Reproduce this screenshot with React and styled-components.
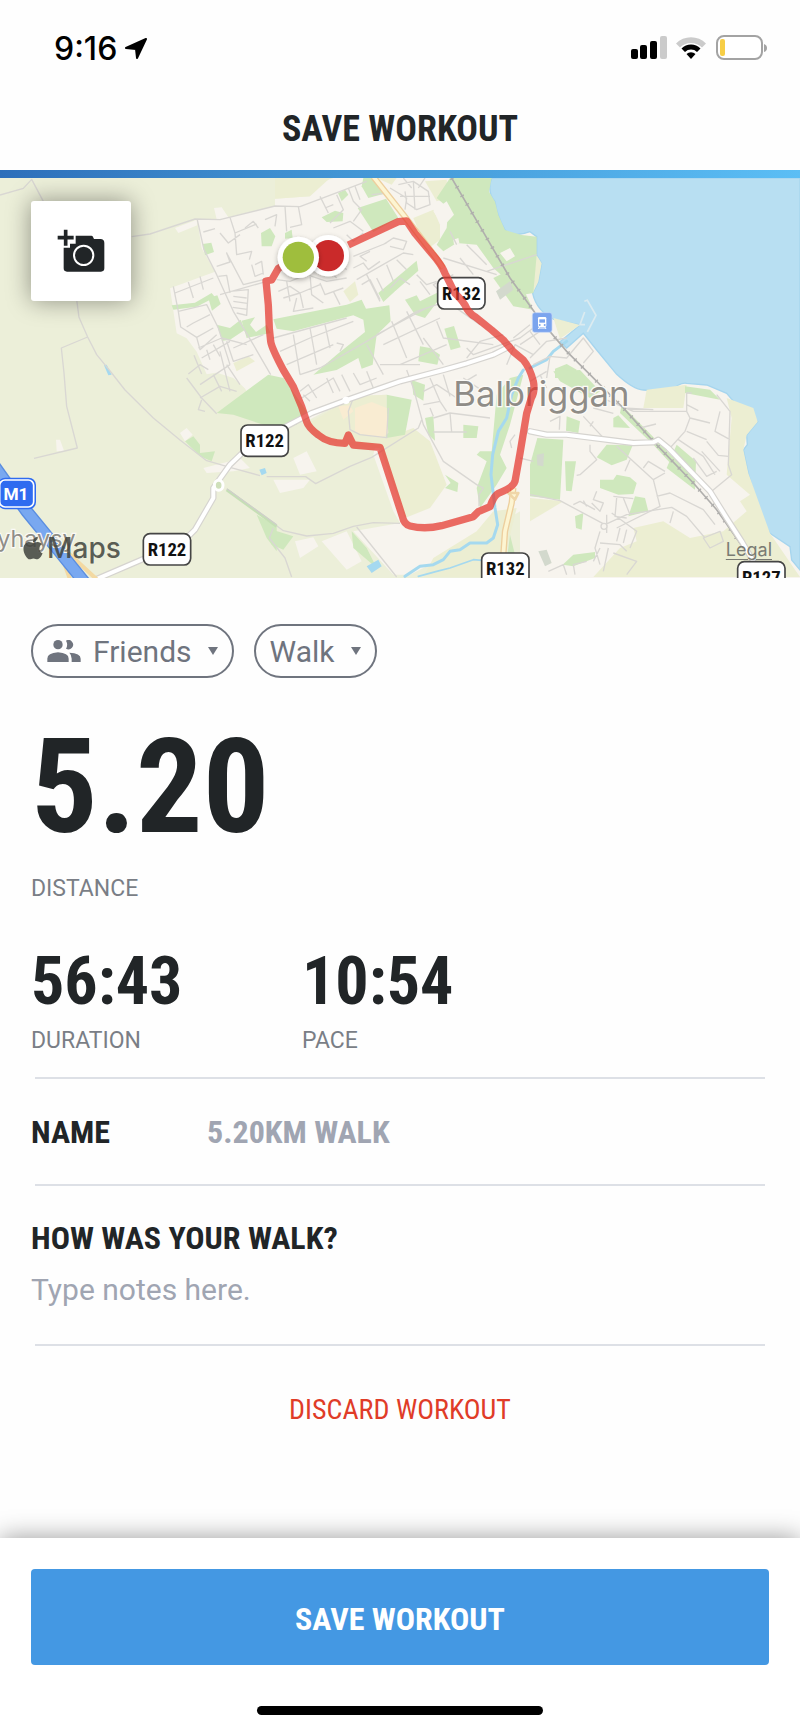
import React from 'react';
import styled, { createGlobalStyle } from 'styled-components';
import { FaApple } from 'react-icons/fa';

const condensed = "'Roboto Condensed', Roboto, 'Liberation Sans', sans-serif";

const GlobalStyle = createGlobalStyle`
  * {
    box-sizing: border-box;
  }

  body {
    margin: 0;
    background: #fefefe;
    font-family: Roboto, 'Liberation Sans', sans-serif;
    color: #212527;
  }

  button,
  input,
  select,
  textarea {
    font-family: inherit;
    margin: 0;
  }
`;

const Screen = styled.div`
  min-height: 100vh;
  display: flex;
  flex-direction: column;
`;

const StatusBar = styled.div`
  display: flex;
  align-items: center;
  justify-content: space-between;
  height: 96px;
  padding: 0 33px 0 54px;
`;

const StatusGroup = styled.div`
  display: flex;
  align-items: center;
  gap: 8px;
`;

const Time = styled.span`
  font-family: Inter, sans-serif;
  font-size: 32px;
  font-weight: 500;
  color: #000;
`;

const TitleBar = styled.header`
  display: flex;
  align-items: center;
  justify-content: center;
  height: 74px;
  padding-bottom: 8px;
`;

const Title = styled.h1`
  margin: 0;
  font-family: ${condensed};
  font-size: 36px;
  line-height: 36px;
  font-weight: 700;
`;

const Accent = styled.div`
  height: 8px;
  background: linear-gradient(90deg, #2d6fba 0%, #3f8fd0 35%, #5bbef5 100%);
`;

const MapArea = styled.section`
  position: relative;
  aspect-ratio: 2 / 1;
  overflow: hidden;
  background: #ecefd9;
`;

const MapSvg = styled.svg`
  display: block;
  width: 100%;
  height: 100%;
`;

const PhotoButton = styled.button`
  position: absolute;
  top: 23px;
  left: 31px;
  display: flex;
  align-items: center;
  justify-content: center;
  width: 100px;
  height: 100px;
  padding: 0;
  border: 0;
  border-radius: 3px;
  background: #fff;
  box-shadow: 0 0 24px rgba(0, 0, 0, 0.4);
  cursor: pointer;
`;

const MapsLogo = styled.div`
  position: absolute;
  left: 20px;
  bottom: 12px;
  display: flex;
  align-items: center;
  gap: 1px;
  font-family: Inter, sans-serif;
  font-size: 28px;
  line-height: 36px;
  font-weight: 500;
  color: rgba(64, 66, 60, 0.85);
`;

const LegalLink = styled.a`
  position: absolute;
  right: 28px;
  bottom: 16px;
  font-family: Inter, sans-serif;
  font-size: 18px;
  line-height: 24px;
  color: #7a7b73;
  text-underline-offset: 3px;
`;

const Content = styled.main`
  flex: 1;
  padding: 46px 31px 0;
`;

const ChipRow = styled.div`
  display: flex;
  gap: 20px;
`;

const Chip = styled.label`
  display: flex;
  align-items: center;
  height: 54px;
  padding: 0 14px;
  border: 2px solid #6f747e;
  border-radius: 27px;
  color: #6f747e;
`;

const ChipSelect = styled.select`
  appearance: none;
  field-sizing: content;
  padding: 2px 0 0;
  margin: 0 16px 0 ${({ $iconed }) => ($iconed ? '12px' : '0')};
  border: 0;
  outline: 0;
  background: transparent;
  color: inherit;
  font-size: 30px;
  line-height: 36px;
`;

const Stat = styled.div`
  display: flex;
  flex-direction: column;
`;

const StatValue = styled.span`
  font-family: ${condensed};
  font-weight: 700;
  font-size: ${({ $large }) => ($large ? '132px' : '66px')};
  line-height: ${({ $large }) => ($large ? '112px' : '70px')};
  margin-bottom: ${({ $large }) => ($large ? '32px' : '10px')};
`;

const StatLabel = styled.span`
  font-size: 23px;
  line-height: 28px;
  color: #7a7e86;
`;

const Distance = styled.section`
  margin-top: 53px;
`;

const StatGrid = styled.section`
  display: grid;
  grid-template-columns: 271px 1fr;
  margin-top: 44px;
  margin-bottom: 22px;
`;

const Rule = styled.hr`
  height: 2px;
  margin: 0 4px;
  border: 0;
  background: #dde0e6;
`;

const NameRow = styled.div`
  display: flex;
  align-items: center;
  height: 105px;
`;

const FieldLabel = styled.label`
  font-family: ${condensed};
  font-size: 32px;
  line-height: 36px;
  font-weight: 700;
`;

const NameLabel = styled(FieldLabel)`
  width: 176px;
`;

const NameInput = styled.input`
  flex: 1;
  min-width: 0;
  padding: 0;
  border: 0;
  outline: 0;
  background: transparent;
  font-family: ${condensed};
  font-size: 32px;
  line-height: 36px;
  font-weight: 700;

  &::placeholder {
    color: #a0a5b2;
    opacity: 1;
  }
`;

const Notes = styled.div`
  display: flex;
  flex-direction: column;
  gap: 16px;
  padding: 34px 0 36px;
`;

const NotesInput = styled.textarea`
  height: 36px;
  padding: 0;
  border: 0;
  outline: 0;
  resize: none;
  background: transparent;
  font-size: 30px;
  line-height: 36px;

  &::placeholder {
    color: #a0a5b2;
    opacity: 1;
  }
`;

const DiscardButton = styled.button`
  display: block;
  margin: 46px auto;
  padding: 0;
  border: 0;
  background: none;
  color: #e03c28;
  font-family: ${condensed};
  font-size: 28px;
  line-height: 36px;
  cursor: pointer;
`;

const Footer = styled.footer`
  display: flex;
  flex-direction: column;
  align-items: center;
  padding: 31px 31px 16px;
  background: #fff;
  box-shadow: 0 0 24px rgba(0, 0, 0, 0.4);
`;

const SaveButton = styled.button`
  width: 100%;
  height: 96px;
  padding: 4px 0 0;
  border: 0;
  border-radius: 4px;
  background: #4498e3;
  color: #fff;
  font-family: ${condensed};
  font-size: 32px;
  font-weight: 700;
  cursor: pointer;
`;

const HomeIndicator = styled.div`
  width: 286px;
  height: 9px;
  margin-top: 41px;
  border-radius: 5px;
  background: #000;
`;

const PARKS = [
  // north-west estates
  'M515 382 L585 374 635 345 645 358 590 386 520 395Z',
  'M625 360 L652 352 662 378 636 398Z',
  'M608 198 L634 194 642 222 615 232Z',
  'M650 440 L690 450 722 425 735 455 690 485 668 488Z',
  'M725 428 L765 418 750 440 768 462 800 440 812 465 740 480Z',
  'M783 165 L810 150 826 175 815 205 785 205Z',
  'M855 165 L875 155 878 180 855 182Z',
  'M965 118 L1005 98 1030 105 1028 130 980 132Z',
  'M1014 45 L1035 35 1045 50 1025 70Z',
  'M1090 0 L1115 0 1150 48 1105 60 1085 25Z',
  'M1073 90 L1158 62 1195 120 1120 162Z',
  // central belt
  'M820 424 L1040 380 1085 365 1098 392 1168 382 1172 430 1130 470 1118 560 1085 572 1075 540 1010 576 940 590 1010 530 1095 462 1090 425 1060 412 880 460 830 452Z',
  'M1135 345 L1250 248 1255 278 1185 340 1150 372Z',
  'M1215 365 L1250 352 1260 370 1310 345 1320 360 1275 420 1245 410Z',
  'M1333 452 L1362 444 1382 508 1352 516Z',
  'M1260 505 L1290 510 1320 530 1312 560 1255 550Z',
  // coast
  'M1350 0 L1475 0 1467 41 1485 71 1495 111 1515 156 1565 171 1610 176 1610 231 1600 345 1570 350 1480 270 1430 200 1370 195 1330 220 1310 200 1340 150 1345 90 1310 60Z',
  'M1480 300 L1540 270 1600 395 1540 385Z',
  'M1665 572 L1700 558 1730 575 1715 600 1665 600Z',
  // around the river and stadium
  'M1235 606 L1275 620 1270 668 1240 650Z',
  'M700 710 L650 705 805 590 850 600 920 700 890 740 795 742Z',
  'M1160 650 L1235 665 1215 770 1160 780Z',
  'M1275 720 L1300 715 1305 788 1285 770Z',
  'M1390 740 L1435 745 1430 780 1390 780Z',
  'M1530 600 L1570 590 1530 740 1500 830 1520 870 1490 920 1440 990 1430 930 1460 850 1430 830 1440 820 1475 820 1490 650Z',
  'M1335 890 L1375 915 1372 942 1335 930 1352 915Z',
  'M1055 1060 L1100 1110 1130 1170 1060 1110Z',
  'M800 1050 L880 1075 850 1115 815 1100Z',
  'M1530 1070 L1545 1130 1520 1150Z',
  // eastern estates
  'M1660 580 L1740 576 1800 640 1770 660 1680 610Z',
  'M1612 780 L1690 785 1680 965 1590 955 1590 860Z',
  'M1700 715 L1740 730 1735 765 1698 758Z',
  'M1840 720 L1855 712 1890 750 1840 748Z',
  'M1695 850 L1728 850 1715 940 1698 938Z',
  'M1790 838 L1820 800 1898 802 1880 845 1835 862Z',
  'M1800 905 L1840 905 1850 890 1890 898 1910 915 1900 948 1855 950 1800 930Z',
  'M1905 955 L1935 960 1945 1000 1885 1015Z',
  'M2000 870 L2030 800 2088 850 2085 935Z',
  'M1865 680 L2080 900 2075 925 1960 800 1860 705Z',
  'M2055 625 L2130 635 2160 665 2055 645Z',
  'M1725 1015 L1750 1005 1745 1055 1728 1050Z',
  'M1688 1160 L1720 1130 1785 1122 1785 1140 1720 1165Z',
  // farmland
  'M555 790 L580 775 600 800 600 825 645 820 635 850 600 835Z',
  'M770 1010 L830 1045 830 1120 800 1080Z',
];

const FIELDS = [
  'M825 0 L990 0 930 55 825 62Z',
  'M1240 120 L1300 95 1320 140 1320 185 1280 215Z',
  'M1130 0 L1190 0 1175 20Z',
  'M1030 340 L1065 310 1075 350 1050 372Z',
  'M1275 10 L1340 5 1345 60 1310 70Z',
  'M700 555 L745 535 765 550 710 580Z',
  'M920 740 L1060 655 1160 650 1160 780 1240 750 1290 790 1340 920 1290 990 1215 1020 1140 811 1040 800 950 780Z',
  'M1940 635 L2060 620 2050 690 1930 690Z',
  'M2180 660 L2260 690 2273 731 2240 771 2230 816 2245 886 2310 1066 2400 1197 1780 1197 1860 1110 1910 1090 1900 1050 1990 1030 2070 1080 2170 1060 2240 1000 2220 970 2250 950 2180 890 2195 720Z',
  'M1430 1060 L1480 1000 1550 990 1500 1197 1270 1197 1300 1140Z',
  'M1590 960 L1690 970 1590 1030Z',
];

const STREETS = [
  // north-west
  'M0 51 L70 31 95 4 130 70 M395 176 L450 168 585 123 660 125 825 84 900 86 1100 10 M230 365 L237 418 263 477 290 530 335 585 375 636 460 720 540 786 620 848 690 868 780 893 M263 477 L184 510 192 585 200 685 232 810 102 841',
  'M592 126 L612 215 650 290 700 400 760 500 812 590 M610 162 L645 152 M650 265 L690 252 680 225 730 320 790 305 M690 118 L705 165 710 230 755 220 748 245 M705 165 L770 138 M660 165 L685 195 720 170 M520 325 L535 400 542 447 590 478 640 450 M525 345 L640 300 M565 312 L580 360 M600 295 L610 335 M535 400 L620 380 655 450 690 560 M560 447 L580 435 630 410 M590 478 L600 515 650 470 M595 510 L665 480 740 500 M605 540 L690 490 M620 515 L630 545 M640 500 L660 535 M565 588 L600 560 625 575 M582 532 L605 588',
  'M690 340 L745 335 740 412 710 405 M700 355 L740 360 M700 370 L742 376 M698 388 L742 394 M655 295 L680 292 690 345 M660 350 L790 313 M755 260 L765 295 790 285 M765 260 L785 250 790 290 M735 150 L760 130 775 150 M680 490 L700 550 760 530 M700 510 L790 470 M600 620 L690 560 M560 600 L605 660 650 707 M600 660 L660 625 710 640 M640 590 L665 640 M680 560 L720 620 M605 665 L595 695 615 700',
  // northern estates
  'M795 125 L830 110 825 145 M855 85 L860 160 M895 86 L905 140 870 148 M960 55 L985 105 M975 90 L1000 80 M1010 50 L1030 95 990 135 M1045 30 L1060 70 1085 95 1060 130 M1065 25 L1080 65 M1000 150 L1050 130 1090 160 M1040 170 L1060 190 1090 165 M1115 50 L1165 45 M1170 30 L1220 60 1215 95 M1195 20 L1240 10 1285 40 1290 80 1250 95 1220 75 1215 40 M1240 10 L1245 95 M1200 55 L1290 55 M1210 0 L1235 30 M1275 0 L1255 30',
  'M1060 235 L1160 195 M1150 200 L1180 180 1220 190 1210 215 1170 205 M1100 250 L1080 235 1110 220 M1060 270 L1090 255 1105 275 1140 250 M1070 305 L1210 225 1240 230 M1100 290 L1140 370 M1130 300 L1150 340 M1160 260 L1180 310 M1190 245 L1220 275 M830 305 L870 310 920 290 980 310 1040 300 M835 340 L870 325 900 345 960 320 M850 360 L900 345 910 390 M860 310 L870 370 M930 290 L935 350 970 375 M960 315 L975 350 1030 330 M980 270 L1010 300 M1015 250 L1040 275 M890 360 L880 400 940 390 M1000 340 L1020 380 M1085 320 L1110 305 1140 365 M1170 330 L1200 300 1230 320 M1250 290 L1280 320 1310 310 M1260 310 L1290 350 M1330 350 L1300 320 1360 290',
  'M820 480 L1040 420 M840 520 L930 480 1060 430 M860 560 L1000 500 M880 470 L900 590 M930 450 L950 560 M975 440 L990 510 M900 590 L960 570 1100 490 1250 400 1340 370 1440 440 M1130 470 L1280 390 M1150 500 L1320 420 M1175 430 L1220 540 M1220 400 L1270 500 M1200 560 L1340 500 M1270 480 L1330 560 M1310 430 L1330 480 1480 500 M1100 500 L1150 590 M1140 560 L1260 560 M1020 520 L1030 500 1010 495 M1400 540 L1440 490 1510 470 M1400 510 L1420 530 1560 480 1640 420 M1560 500 L1650 440 M1540 480 L1590 440 M1350 160 L1370 200 M1330 240 L1490 290 M1400 200 L1460 260 M1380 240 L1420 290 M1460 280 L1610 230',
  // town centre
  'M1520 560 L1545 500 1600 530 M1590 540 L1640 490 1700 480 M1600 560 L1650 535 1700 540 1750 480 1780 520 1750 555 M1650 535 L1640 600 M1590 460 L1620 500 M1590 610 L1640 580',
  'M905 660 L1000 600 1020 640 M900 640 L925 620 950 660 M930 670 L910 650 M980 600 L1000 645 M1025 590 L1050 640 M1060 585 L1080 620 1130 600 M1100 580 L1120 630 M1220 576 L1240 630 1270 740 1330 850 1430 920 1450 930 1437 950 1437 985 M1270 640 L1310 620 1370 660 M1290 600 L1320 670 M1330 590 L1350 655 M1270 680 L1320 670 1340 700 M1300 720 L1350 705 1470 720 M1300 762 L1400 762 M1350 705 L1355 762 M1290 690 L1300 715 M1390 600 L1450 640 M1430 590 L1380 620 M1545 770 L1530 790 1535 810 M1620 590 L1640 630 M1560 840 L1600 850',
  'M660 520 L690 640 M800 896 L917 896 947 917 1050 865 1115 838 1255 750 1265 725 M795 1018 L850 1058 920 1074 1000 1066 1060 1045 1120 1034 1200 1036 M1070 1047 L1190 1197 M820 1050 L808 1080 855 1140 875 1197 M1060 660 L1045 700 1050 755 1080 770 1160 779 1165 690',
  // eastern estates
  'M1760 640 L1900 700 2060 700 2060 645 2075 645 M1870 690 L1960 695 M2060 700 L2070 720 2130 735 M2060 680 L2095 698 M2070 720 L2055 760 2010 810 M2060 760 L2120 785 M2035 785 L2110 835 2145 890 M2105 820 L2160 880 M2080 840 L2120 895 2150 880 M2160 700 L2145 760 2190 785 M2150 650 L2190 700 2185 860 2195 890 2135 940 M2120 790 L2155 832 2185 835 M1750 715 L1820 790 M1770 745 L1780 730 M1650 730 L1680 715 1678 755 M1920 750 L1968 738 M1780 690 L1840 706 M1770 800 L1770 820 1790 845 1740 890 1730 892 M1850 805 L1960 905 1995 885 M1890 845 L1875 880 M1930 870 L1945 850 1995 880 M1960 905 L1980 985 1850 1050 M1970 955 L2010 945 2110 995 2145 1040',
  'M1590 950 L1680 968 1815 1040 1880 1010 2015 988 2060 1015 2115 1080 M1720 980 L1740 970 1785 995 M1750 968 L1760 985 M1790 940 L1780 965 1810 975 1800 1000 1775 975 M1840 955 L1900 962 M1850 960 L1845 1015 1880 1020 M1870 960 L1890 1010 M1820 1010 L1820 1065 M1835 1005 L1910 1060 1890 1110 M1800 1060 L1785 1110 1800 1160 M1800 1095 L1860 1100 1880 1120 M1825 1110 L1810 1180 M1840 1125 L1910 1150 1880 1190 M1860 1050 L1850 1090 M1880 1055 L1870 1095 M2020 1000 L2010 1035 M2110 1080 L2160 1060 2170 1090 2130 1110Z M1645 1180 L1690 1160 1700 1190 M1725 1190 L1720 1160 1760 1150 M1800 1110 L1780 1150',
];

const MAIN_ROADS = [
  'M290 1203 L430 1143 560 1080 585 1055 640 960 640 930 690 860 740 812 865 742 935 705 1040 666 1200 610 1330 576 1400 556 1480 530 1530 505',
  'M1590 760 L1640 770 1700 770 1900 795 1960 793 1975 785 2005 810 2130 940 2180 1020 2225 1090 2260 1150',
];

const RAILWAY = 'M1355 0 L1440 145 1530 300 1620 425 1700 520 1770 590 1870 690 1960 790 2080 915 2150 995 2230 1110';

const COAST_ROAD = 'M1120 -4 L1210 110 1290 215 1330 270 M1540 930 L1535 975 1515 1060 1510 1130';

const MOTORWAY = 'M-20 860 L80 1000 170 1110 255 1215';

const ROUTE =
  'M1045 201 L1195 131 1220 129 1245 166 1295 226 Q1325 260 1335 286 L1365 346 Q1385 365 1395 381 Q1405 405 1425 416 L1475 456 1510 486 1540 521 1570 546 Q1590 570 1600 610 Q1606 640 1594 660 L1580 706 1560 826 1545 910 Q1540 928 1495 946 Q1482 952 1470 986 L1435 1001 1420 1016 1325 1043 Q1275 1055 1230 1044 Q1212 1040 1207 1015 L1140 808 1115 806 1060 801 1045 771 1035 796 Q985 796 955 771 Q925 748 920 731 L905 686 880 626 850 576 Q815 510 812 490 L808 451 805 381 798 309 815 306 835 271 880 245';

const SHIELDS = [
  { name: 'R122', x: 723, y: 741 },
  { name: 'R122', x: 430, y: 1067 },
  { name: 'R132', x: 1313, y: 299 },
  { name: 'R132', x: 1445, y: 1125 },
  { name: 'R127', x: 2213, y: 1151 },
];

function RoadShield({ x, y, name }) {
  return (
    <g>
      <rect x={x} y={y} width="142" height="94" rx="20" fill="#fff" stroke="#454545" strokeWidth="5" />
      <text
        x={x + 71}
        y={y + 67}
        textAnchor="middle"
        fontFamily={condensed}
        fontWeight="700"
        fontSize="56"
        fill="#111"
      >
        {name}
      </text>
    </g>
  );
}

function WorkoutMap() {
  return (
    <MapSvg viewBox="0 0 2400 1200" preserveAspectRatio="xMidYMid slice" role="img" aria-label="Route map">
      <defs>
        <filter id="pinShadow" x="-30%" y="-30%" width="160%" height="160%">
          <feDropShadow dx="0" dy="6" stdDeviation="8" floodOpacity="0.3" />
        </filter>
      </defs>
      <rect width="2400" height="1200" fill="#ecefd9" />

      {/* built-up area */}
      <g fill="#f7f4ee">
        <path d="M510 331 L645 281 605 211 592 126 650 124 642 90 665 88 685 118 825 84 825 62 930 55 935 25 1000 0 2400 0 2400 1200 1560 1200 1560 1000 1430 1080 1310 1150 1230 1190 1180 1190 1060 1060 1200 1035 1180 1000 1120 830 1160 650 1060 655 920 730 850 600 740 640 700 575 620 589 590 521 560 481 530 466Z" />
        <path d="M525 150 L590 125 592 142 535 165Z M540 765 L560 750 578 770 555 790Z M168 785 L180 785 192 818 170 820Z M880 840 L920 820 950 880 900 890Z M820 905 L930 905 910 930 840 945Z M885 1090 L940 1078 955 1105 900 1140Z M965 1090 L1040 1060 1085 1150 1040 1175Z M610 870 L690 850 720 840 750 870 700 880 620 885Z M625 576 L780 576 740 635 700 600Z" />
      </g>

      <path
        d="M1475 0 Q1460 41 1485 71 Q1490 111 1515 156 Q1540 180 1590 161 L1610 176 1610 231 1625 256 1615 311 1598 346 Q1610 400 1665 426 L1740 441 1680 491 1700 510 1750 466 1790 516 1850 589 Q1900 635 1930 636 L2010 641 Q2040 612 2060 616 L2120 621 2180 646 2210 681 2215 704 2250 694 2252 715 2273 731 2240 771 2242 800 2230 816 2245 886 2270 976 Q2275 1010 2310 1066 L2370 1106 2375 1146 2400 1176 2400 0Z"
        fill="#b8dff2"
        stroke="#a6d5ee"
        strokeWidth="4"
      />
      <g fill="#eceed2">
        <path d="M1660 420 L1740 441 1680 482Z M1590 235 L1612 235 1625 256 1615 311 1598 346 1590 340Z" />
        {FIELDS.map((d) => (
          <path key={d} d={d} />
        ))}
      </g>
      <g fill="#cfe8bd">
        {PARKS.map((d) => (
          <path key={d} d={d} />
        ))}
      </g>
      <path d="M1065 690 L1115 672 1160 690 1165 765 1145 780 1065 765Z M1015 685 L1050 682 1060 700 1030 725Z" fill="#f9ecd2" />
      <path d="M1488 340 L1530 310 1540 335 1500 365Z M1610 830 L1632 826 1630 865 1612 862Z M1615 1120 L1640 1115 1655 1155 1635 1165Z" fill="#d3d9cd" />
      <path d="M1300 100 L1340 70 1362 110 1330 145Z M1500 225 L1530 210 1545 235 1520 250Z M1360 185 L1375 180 1378 195 1362 200Z" fill="#f7f4ee" />
      <path d="M1100 1165 L1135 1145 1145 1165 1115 1185Z M778 875 L795 870 800 885 785 892Z M312 562 L320 560 335 590 325 592Z" fill="#a5d9f0" />

      {/* streams and harbour */}
      <g fill="none" stroke="#a5d9ef" strokeLinecap="round" strokeLinejoin="round">
        <path d="M1700 490 L1660 520 1640 545 1590 570 M1570 576 L1555 600 1535 650 1520 720 1495 760 1478 830 1473 890 1485 990 1493 1040 1480 1080 1460 1095 1410 1095 1380 1115 1350 1120 1330 1145 1300 1160 1260 1165 1215 1195" strokeWidth="9" />
        <path d="M1255 1195 L1310 1180 1350 1170 1420 1145 1480 1150" strokeWidth="5" />
      </g>
      <path d="M1753 370 L1762 367 1788 412 1762 462 M1754 402 L1740 440 1755 440" fill="none" stroke="#dcebf0" strokeWidth="5" />

      <g fill="none" stroke="#d9d7d3" strokeWidth="4" strokeLinejoin="round">
        {STREETS.map((d) => (
          <path key={d} d={d} />
        ))}
      </g>
      <path d="M680 935 L830 1045" stroke="#c5dfb5" strokeWidth="9" />
      <path d="M680 932 L830 1040" stroke="#cfcfca" strokeWidth="4" />

      {/* railway */}
      <g fill="none" stroke="#b0afad">
        <path d={RAILWAY} strokeWidth="5" />
        <path d={RAILWAY} strokeWidth="12" strokeDasharray="4 26" />
      </g>

      {/* R132 either side of the town */}
      <g fill="none" strokeLinejoin="round">
        <path d={COAST_ROAD} stroke="#edcf9e" strokeWidth="19" />
        <path d={COAST_ROAD} stroke="#fdf5d2" strokeWidth="11" />
        <path d="M1525 945 L1555 945 1545 965Z" stroke="#f0d6a8" strokeWidth="8" fill="#fdf5d2" />
      </g>

      <g fill="none" strokeLinejoin="round" strokeLinecap="round">
        {MAIN_ROADS.map((d) => (
          <path key={d} d={d} stroke="#d6d4d0" strokeWidth="19" />
        ))}
        {MAIN_ROADS.map((d) => (
          <path key={d} d={d} stroke="#fff" strokeWidth="12" />
        ))}
        <ellipse cx="656" cy="922" rx="13" ry="15" fill="#cfe0bb" stroke="#fff" strokeWidth="9" />
        <circle cx="1038" cy="667" r="11" fill="#fff" />
        <circle cx="1812" cy="1045" r="9" fill="#f7f4ee" stroke="#d9d7d3" strokeWidth="4" />
      </g>

      {/* motorway */}
      <path d="M150 1075 L290 1204 M180 1120 L210 1204" stroke="#f3d9a2" strokeWidth="12" />
      <path d={MOTORWAY} fill="none" stroke="#5b8ee0" strokeWidth="38" />
      <path d={MOTORWAY} fill="none" stroke="#79a8f0" strokeWidth="30" />

      <g fontFamily="Inter, sans-serif">
        <text x="1360" y="685" fontSize="104" fill="#8f8c87" stroke="#fbfaf6" strokeWidth="8" paintOrder="stroke">
          Balbriggan
        </text>
        <text x="-8" y="1106" fontSize="70" fill="#8f8e88" stroke="#fbfaf6" strokeWidth="7" paintOrder="stroke">
          yhaysy
        </text>
      </g>

      {SHIELDS.map((shield) => (
        <RoadShield key={`${shield.x}-${shield.y}`} {...shield} />
      ))}
      <rect x="-6" y="899" width="114" height="95" rx="22" fill="#2f6bf0" />
      <rect x="-1" y="906" width="102" height="81" rx="16" fill="none" stroke="#fff" strokeWidth="5" />
      <text x="48" y="965" textAnchor="middle" fontFamily="Roboto, sans-serif" fontWeight="700" fontSize="52" fill="#fff">
        M1
      </text>

      {/* railway station */}
      <g transform="translate(1597 404)">
        <rect width="59" height="59" rx="7" fill="#7ba4ee" stroke="#c5d8f8" strokeWidth="2" />
        <path d="M21 13h17q4 0 4 4v22q0 4-4 4H21q-4 0-4-4V17q0-4 4-4z" fill="#fff" />
        <path d="M21 20h17v10H21z" fill="#7ba4ee" />
        <circle cx="22" cy="37" r="3" fill="#7ba4ee" />
        <circle cx="37" cy="37" r="3" fill="#7ba4ee" />
        <path d="M22 42l-4 7M37 42l4 7M20 46h19" stroke="#fff" strokeWidth="3" />
      </g>

      <path d={ROUTE} fill="none" stroke="#e5352c" strokeOpacity="0.72" strokeWidth="22" strokeLinejoin="round" />

      <g filter="url(#pinShadow)">
        <circle cx="985" cy="233" r="62" fill="#fff" />
        <circle cx="985" cy="233" r="47" fill="#ca292b" />
      </g>
      <g filter="url(#pinShadow)">
        <circle cx="895" cy="238" r="62" fill="#fff" />
        <circle cx="895" cy="238" r="47" fill="#9fbe3c" />
      </g>
    </MapSvg>
  );
}

function AddPhotoIcon() {
  return (
    <svg width="48" height="44" viewBox="0 0 144 132" aria-hidden="true">
      <path
        d="M56 20h47q4 0 5 4l3 6h19q12 0 12 12v76q0 10-10 10H30q-10 0-10-10V56h19V44h17z"
        fill="#212527"
      />
      <path d="M26 2v48M2 26h48" stroke="#fff" strokeWidth="20" />
      <path d="M26 2v48M2 26h48" stroke="#212527" strokeWidth="11" />
      <circle cx="80" cy="79" r="29" fill="none" stroke="#fff" strokeWidth="6" />
    </svg>
  );
}

function FriendsIcon() {
  return (
    <svg width="34" height="22" viewBox="0 0 100 66" fill="currentColor" aria-hidden="true">
      <circle cx="32" cy="14" r="14" />
      <path d="M0 66V56q0-17 32-19 32 2 32 19v10z" />
      <path d="M56 2a14 14 0 1 1 0 24q7-12 0-24z" />
      <path d="M66 38q34 1 34 18v10H73V56q0-11-7-18z" />
    </svg>
  );
}

function Caret() {
  return (
    <svg width="10" height="8" viewBox="0 0 10 8" aria-hidden="true">
      <path d="M0 0h10L5 8z" fill="currentColor" />
    </svg>
  );
}

function StatusIcons() {
  return (
    <svg width="136" height="26" viewBox="0 0 136 26" aria-hidden="true">
      <rect x="0" y="14" width="7" height="10" rx="2" />
      <rect x="9" y="10" width="7" height="14" rx="2" />
      <rect x="19" y="6" width="7" height="18" rx="2" />
      <rect x="29" y="1" width="7" height="23" rx="2" fill="#cbcbcb" />
      <g transform="translate(60 0)">
        <path d="M-15 8.500 A21 21 0 0 1 15 8.500 L11 12.500 A15.500 15.500 0 0 0 -11 12.500z" fill="#cbcbcb" />
        <path d="M-9.500 13.500 A13.500 13.500 0 0 1 9.500 13.500 L6 17 A8.500 8.500 0 0 0 -6 17z" />
        <path d="M-4.500 19 A6.500 6.500 0 0 1 4.500 19 L0 24z" />
      </g>
      <rect x="86" y="1" width="45" height="23" rx="7" fill="#fff" stroke="#a3a3a3" strokeWidth="2" />
      <rect x="89" y="4" width="5" height="17" rx="2" fill="#f7ce46" />
      <path d="M133 9q3 1 3 4t-3 4z" fill="#a3a3a3" />
    </svg>
  );
}

function App() {
  return (
    <>
      <GlobalStyle />
      <Screen>
        <StatusBar>
          <StatusGroup>
            <Time>9:16</Time>
            <svg width="22" height="21" viewBox="0 0 22 21" aria-hidden="true">
              <path d="M21 1 L12 20 L11 11 L1 10z" stroke="#000" strokeWidth="2" strokeLinejoin="round" />
            </svg>
          </StatusGroup>
          <StatusIcons />
        </StatusBar>
        <TitleBar>
          <Title>SAVE WORKOUT</Title>
        </TitleBar>
        <Accent />

        <MapArea>
          <WorkoutMap />
          <PhotoButton type="button" aria-label="Add photo">
            <AddPhotoIcon />
          </PhotoButton>
          <MapsLogo>
            <FaApple size={26} aria-hidden="true" />
            Maps
          </MapsLogo>
          <LegalLink href="#legal">Legal</LegalLink>
        </MapArea>

        <Content>
          <ChipRow>
            <Chip>
              <FriendsIcon />
              <ChipSelect $iconed aria-label="Privacy" defaultValue="Friends">
                <option>Friends</option>
              </ChipSelect>
              <Caret />
            </Chip>
            <Chip>
              <ChipSelect aria-label="Activity" defaultValue="Walk">
                <option>Walk</option>
              </ChipSelect>
              <Caret />
            </Chip>
          </ChipRow>

          <Distance>
            <Stat>
              <StatValue $large>5.20</StatValue>
              <StatLabel>DISTANCE</StatLabel>
            </Stat>
          </Distance>

          <StatGrid>
            <Stat>
              <StatValue>56:43</StatValue>
              <StatLabel>DURATION</StatLabel>
            </Stat>
            <Stat>
              <StatValue>10:54</StatValue>
              <StatLabel>PACE</StatLabel>
            </Stat>
          </StatGrid>
          <Rule />

          <NameRow>
            <NameLabel htmlFor="workout-name">NAME</NameLabel>
            <NameInput id="workout-name" placeholder="5.20KM WALK" />
          </NameRow>
          <Rule />

          <Notes>
            <FieldLabel htmlFor="workout-notes">HOW WAS YOUR WALK?</FieldLabel>
            <NotesInput id="workout-notes" placeholder="Type notes here." />
          </Notes>
          <Rule />

          <DiscardButton type="button">DISCARD WORKOUT</DiscardButton>
        </Content>

        <Footer>
          <SaveButton type="button">SAVE WORKOUT</SaveButton>
          <HomeIndicator />
        </Footer>
      </Screen>
    </>
  );
}

export default App;
